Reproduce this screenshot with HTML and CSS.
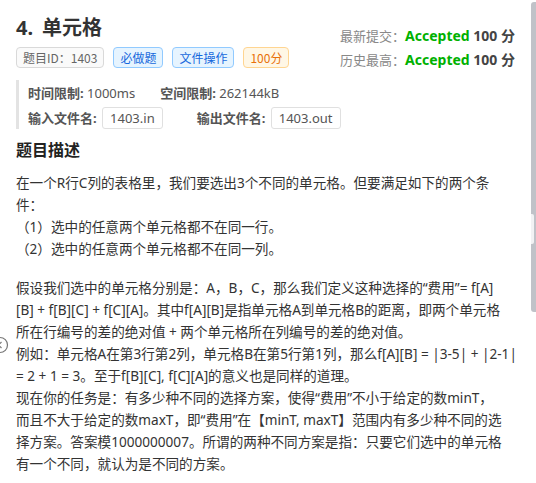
FILE: index.html
```html
<!DOCTYPE html><html><head><meta charset="utf-8"/>
<meta name="viewport" content="width=device-width, initial-scale=1.0"/>
<title>4. 单元格</title>
<link rel="stylesheet" href="styles.css">
</head>
<body>

<div class="card">
  <div class="head">
    <div class="head-left">
      <h1><span class="no">4.</span>单元格</h1>
      <div class="tags">
        <span class="tag">题目ID：1403</span>
        <span class="tag blue">必做题</span>
        <span class="tag blue">文件操作</span>
        <span class="tag orange">100分</span>
      </div>
    </div>
    <div class="status">
      <div><span class="lbl">最新提交：</span><span class="ac">Accepted</span> <b>100 分</b></div>
      <div><span class="lbl">历史最高：</span><span class="ac">Accepted</span> <b>100 分</b></div>
    </div>
  </div>

  <div class="limits">
    <div class="row">
      <span class="item"><b>时间限制:</b> 1000ms</span>
      <span class="item"><b>空间限制:</b> 262144kB</span>
    </div>
    <div class="row files">
      <span class="item"><b>输入文件名:</b> <code>1403.in</code></span>
      <span class="item"><b>输出文件名:</b> <code>1403.out</code></span>
    </div>
  </div>

  <h2>题目描述</h2>
  <div class="desc">
    <p>在一个R行C列的表格里，我们要选出3个不同的单元格。但要满足如下的两个条<br>件：<br>（1）选中的任意两个单元格都不在同一行。<br>（2）选中的任意两个单元格都不在同一列。</p>
    <p>假设我们选中的单元格分别是：A，B，C，那么我们定义这种选择的“费用”= f[A]<br>[B] + f[B][C] + f[C][A]。其中f[A][B]是指单元格A到单元格B的距离，即两个单元格<br>所在行编号的差的绝对值 + 两个单元格所在列编号的差的绝对值。<br>例如：单元格A在第3行第2列，单元格B在第5行第1列，那么f[A][B] = |3-5| + |2-1|<br>= 2 + 1 = 3。至于f[B][C], f[C][A]的意义也是同样的道理。<br>现在你的任务是：有多少种不同的选择方案，使得“费用”不小于给定的数minT，<br>而且不大于给定的数maxT，即“费用”在【minT, maxT】范围内有多少种不同的选<br>择方案。答案模1000000007。所谓的两种不同方案是指：只要它们选中的单元格<br>有一个不同，就认为是不同的方案。</p>
  </div>
</div>

<div class="rail"><div class="notch"></div></div>
<div class="back">
  <svg width="18" height="18" viewBox="0 0 18 18"><circle cx="9" cy="9" r="7.5" fill="none" stroke="#777" stroke-width="1.2"/><path d="M10.5 6 L7.5 9 L10.5 12" fill="none" stroke="#777" stroke-width="1.2"/></svg>
</div>

</body>
</html>
```

FILE: styles.css
```css
body {
  margin: 0;
  background: #fff;
  font-family: "Noto Sans", "Noto Sans CJK SC", sans-serif;
  color: #333;
  position: relative;
  min-height: 483px;
  overflow: hidden;
}
.card {
  width: 499px;
  padding: 14px 0 0 16px;
}
/* header */
.head {
  display: flex;
  justify-content: space-between;
}
h1 {
  margin: 0;
  font-size: 20px;
  line-height: 28px;
  color: #333;
}
h1 .no {
  margin-right: 9px;
}
.tags {
  display: flex;
  gap: 9px;
  margin-top: 5px;
}
.tag {
  height: 19px;
  line-height: 19px;
  padding: 0 6px;
  border: 1px solid #d9d9d9;
  border-radius: 4px;
  background: #fafafa;
  color: #666;
  font-family: "Noto Sans CJK SC", sans-serif;
  font-size: 12px;
}
.tag.blue {
  background: #e6f4ff;
  border-color: #91caff;
  color: #1668dc;
}
.tag.orange {
  background: #fff7e6;
  border-color: #ffd591;
  color: #e8710a;
}
.status {
  margin-top: 10px;
  font-size: 14px;
  line-height: 23px;
  text-align: right;
}
.status .lbl {
  color: #888;
  font-size: 13px;
}
.status .ac {
  color: #00b100;
  font-weight: bold;
}
.status b {
  color: #444;
}
/* limits */
.limits {
  margin-top: 8px;
  border-left: 3px solid #e3e3e3;
  padding: 1px 0 0 9px;
  font-size: 13px;
  color: #555;
}
.limits .row {
  display: flex;
  gap: 25px;
  height: 22px;
  align-items: center;
  margin-bottom: 4px;
}
.limits .row.files {
  gap: 34px;
  margin-bottom: 0;
}
.limits b {
  color: #555;
}
code {
  display: inline-block;
  font-family: inherit;
  height: 20px;
  line-height: 20px;
  padding: 0 7px;
  border: 1px solid #e0e0e0;
  border-radius: 3px;
  margin-left: 2px;
}
h2 {
  margin: 10px 0 0;
  font-size: 16px;
  line-height: 22px;
  color: #222;
}
.desc {
  width: 505px;
  margin-top: 11px;
  font-size: 13.6px;
  line-height: 22px;
  color: #333;
}
.desc p {
  margin: 0 0 17px;
}
/* right rail and back button */
.rail {
  position: absolute;
  right: 0;
  top: 2px;
  width: 5px;
  height: 310px;
  background: #c0c2c8;
  border-radius: 3px 0 0 3px;
}
.notch {
  margin-top: 212px;
  width: 3px;
  height: 30px;
  background: #f2f2f4;
  border-radius: 0 2px 2px 0;
}
.back {
  position: absolute;
  left: -9px;
  top: 336px;
}
```
